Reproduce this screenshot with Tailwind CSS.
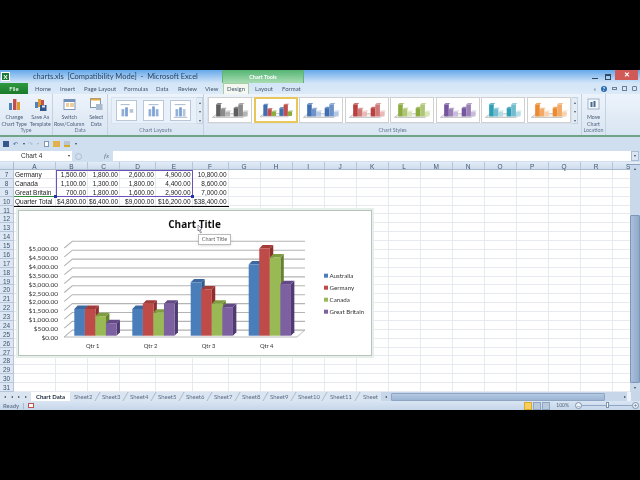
<!DOCTYPE html>
<html lang="en">
  <head>
    <meta charset="UTF-8" />
    <title>charts.xls - Microsoft Excel</title>
    <script src="https://cdn.jsdelivr.net/npm/@tailwindcss/browser@4"></script>
  </head>
  <body class="bg-black">
    <div class="w-[640px] h-[480px] bg-black flex flex-col overflow-hidden font-['Lato',sans-serif] text-[#4a5e78] relative blur-[0.3px]">
      <div class="h-[70px] shrink-0"></div>

      <!-- title bar -->
      <div class="h-[13px] shrink-0 flex items-center bg-gradient-to-b from-[#64a8ea] to-[#d3e5f7] relative">
        <div class="w-[9px] h-[9px] ml-[1px] bg-[#1f7a3a] border border-white text-white text-[6px] leading-[7px] text-center font-bold">X</div>
        <div class="ml-[23px] text-[7.5px] text-[#2a4462] whitespace-pre">charts.xls  [Compatibility Mode]  -  Microsoft Excel</div>
        <div class="absolute left-[222px] top-0 w-[82px] h-[13px] bg-gradient-to-b from-[#58b878] to-[#a8dcb4] border-x border-t border-[#5fb574] text-white text-[5.5px] font-bold text-center leading-[13px]">Chart Tools</div>
        <div class="ml-auto flex items-center h-full">
          <div class="w-[6px] h-[1.5px] bg-[#33475e] mr-[7px] mt-[4px]"></div>
          <div class="w-[6px] h-[6px] border border-t-2 border-[#33475e] mr-[4px]"></div>
          <div class="w-[23px] h-[10px] bg-[#d05a58] text-white text-[7px] leading-[9px] text-center font-bold mr-[2px] mb-[3px]">✕</div>
        </div>
      </div>

      <!-- tabs -->
      <div class="h-[11px] shrink-0 flex items-center text-[6px] text-[#44566e] bg-gradient-to-b from-[#d3e5f7] to-[#dceaf8] relative">
        <div class="w-[28px] h-full bg-gradient-to-b from-[#2f9a3f] to-[#1a7a2c] text-white text-center leading-[11px]">File</div>
        <span class="absolute left-[35px]">Home</span>
        <span class="absolute left-[60px]">Insert</span>
        <span class="absolute left-[84px]">Page Layout</span>
        <span class="absolute left-[124px]">Formulas</span>
        <span class="absolute left-[156px]">Data</span>
        <span class="absolute left-[178px]">Review</span>
        <span class="absolute left-[205px]">View</span>
        <span class="absolute left-[223px] w-[26px] h-[11px] bg-[#f4f8f0] border-x border-t border-[#a8cfa8] text-center leading-[10px]">Design</span>
        <span class="absolute left-[255px]">Layout</span>
        <span class="absolute left-[282px]">Format</span>
        <div class="ml-auto flex items-center gap-[5px] pr-[3px]">
          <span class="text-[6px] text-[#5a6f88]">«</span>
          <span class="w-[6px] h-[6px] rounded-full bg-[#2a6cb0] text-white text-[5px] leading-[6px] text-center font-bold">?</span>
          <span class="w-[5px] h-[3px] border border-[#6a7f98]"></span>
          <span class="w-[5px] h-[5px] border border-[#6a7f98]"></span>
          <span class="w-[5px] h-[5px] border border-[#6a7f98] rounded-[1px]"></span>
        </div>
      </div>

      <!-- ribbon -->
      <div class="h-[43px] shrink-0 flex bg-gradient-to-b from-[#edf3fb] to-[#d9e5f2] border-b-2 border-[#6fa586] text-[5.3px] leading-[6.5px] text-center whitespace-nowrap">
        <div class="w-[53px] flex flex-col border-r border-[#c5d2e2]">
          <div class="flex-1 flex pt-[4px]">
            <div class="w-[29px] flex flex-col items-center">
              <svg class="w-[13px] h-[13px]" viewBox="0 0 13 13"><rect x="1" y="5" width="3" height="7" fill="#4f81bd"/><rect x="5" y="1" width="3.400" height="11" fill="#c0504d"/><rect x="9" y="4" width="3" height="8" fill="#e39a2c"/></svg>
              <div class="mt-[3px]">Change<br />Chart Type</div>
            </div>
            <div class="w-[24px] flex flex-col items-center">
              <svg class="w-[13px] h-[13px]" viewBox="0 0 13 13"><rect x="1" y="4" width="3" height="6" fill="#4f81bd"/><rect x="4" y="1" width="3" height="8" fill="#e39a2c"/><rect x="7" y="2" width="3" height="5" fill="#c0504d"/><rect x="6" y="7" width="6.500" height="6" fill="#34568a"/><rect x="8" y="7.500" width="3" height="2" fill="#dfe9f5"/></svg>
              <div class="mt-[3px]">Save As<br />Template</div>
            </div>
          </div>
          <div class="h-[8px] text-[#62768e]">Type</div>
        </div>
        <div class="w-[55px] flex flex-col border-r border-[#c5d2e2]">
          <div class="flex-1 flex pt-[4px]">
            <div class="w-[33px] flex flex-col items-center">
              <svg class="w-[13px] h-[13px]" viewBox="0 0 13 13"><rect x="1" y="1.500" width="11" height="10" fill="#fff" stroke="#7d97b8"/><rect x="1" y="1.500" width="11" height="2.500" fill="#6f8fb8"/><path d="M3 6h3M7 6h4M3 8h3M7 8h4" stroke="#d99a3a"/></svg>
              <div class="mt-[3px]">Switch<br />Row/Column</div>
            </div>
            <div class="w-[22px] flex flex-col items-center">
              <svg class="w-[13px] h-[13px]" viewBox="0 0 13 13"><rect x="0.500" y="0.500" width="10" height="9" fill="#fff" stroke="#7d97b8"/><rect x="0.500" y="0.500" width="10" height="2" fill="#e3a83e"/><rect x="6" y="6" width="6.500" height="6" fill="#a9bacd"/></svg>
              <div class="mt-[3px]">Select<br />Data</div>
            </div>
          </div>
          <div class="h-[8px] text-[#62768e]">Data</div>
        </div>
        <div class="w-[96px] flex flex-col border-r border-[#c5d2e2]">
          <div class="flex-1 flex items-center pl-[3px] pb-[1px]">
            <div class="flex h-[27px] w-[86px] items-center gap-[6px] bg-[#e8f0f9] border border-[#d8e2ee] pl-[4px]">
              <svg class="w-[21px] h-[21px] bg-white border border-[#b9c7d8] shrink-0" viewBox="0 0 21 21"><path d="M4 4h10" stroke="#9db1cb"/><rect x="5" y="9" width="3" height="8" fill="#8fb0dc"/><rect x="9" y="7" width="3" height="10" fill="#7b9fd2"/><rect x="14" y="9" width="4" height="4" fill="#b3c4dc"/></svg>
              <svg class="w-[21px] h-[21px] bg-white border border-[#b9c7d8] shrink-0" viewBox="0 0 21 21"><path d="M5 4h11" stroke="#9db1cb"/><rect x="5" y="9" width="3" height="8" fill="#8fb0dc"/><rect x="9" y="6" width="3" height="11" fill="#7b9fd2"/><rect x="13" y="9" width="3" height="8" fill="#8fb0dc"/></svg>
              <svg class="w-[21px] h-[21px] bg-white border border-[#b9c7d8] shrink-0" viewBox="0 0 21 21"><path d="M4 4h12M3 18h15" stroke="#9db1cb"/><rect x="5" y="9" width="3" height="8" fill="#8fb0dc"/><rect x="9" y="7" width="3" height="10" fill="#7b9fd2"/><rect x="13" y="9" width="3" height="8" fill="#b3c4dc"/></svg>
            </div>
            <div class="flex flex-col w-[6px] h-[27px] text-[4px] leading-[9px] bg-[#e3ebf5] border-y border-r border-[#c5d2e2] text-[#4a5d75]"><span>▴</span><span>▾</span><span>▾</span></div>
          </div>
          <div class="h-[8px] text-[#62768e]">Chart Layouts</div>
        </div>
        <div class="w-[378px] flex flex-col border-r border-[#c5d2e2]">
          <div class="flex-1 flex items-center pl-[3px] pb-[1px]">
            <div id="gallery" class="flex h-[27px] w-[365px] items-center justify-between bg-white border border-[#d8e2ee]"></div>
            <div class="flex flex-col w-[6px] h-[27px] text-[4px] leading-[9px] bg-[#e3ebf5] border-y border-r border-[#c5d2e2] text-[#4a5d75]"><span>▴</span><span>▾</span><span>▾</span></div>
          </div>
          <div class="h-[8px] text-[#62768e]">Chart Styles</div>
        </div>
        <div class="w-[24px] flex flex-col border-r border-[#c5d2e2]">
          <div class="flex-1 flex flex-col items-center pt-[4px]">
            <svg class="w-[13px] h-[13px]" viewBox="0 0 13 13"><rect x="1" y="1" width="11" height="10" fill="#f7fafd" stroke="#9db1cb"/><rect x="3.500" y="4" width="2" height="5" fill="#4a6a94"/><rect x="6.500" y="3" width="2" height="6" fill="#4a6a94"/></svg>
            <div class="mt-[3px]">Move<br />Chart</div>
          </div>
          <div class="h-[8px] text-[#62768e]">Location</div>
        </div>
      </div>

      <!-- quick access -->
      <div class="h-[14px] shrink-0 flex items-center bg-[#cfdfef] text-[6px] leading-none relative">
        <span class="absolute left-[3px] w-[6px] h-[6px] bg-[#34568a]"></span>
        <span class="absolute left-[13px] text-[#3a5f94]">↶</span>
        <span class="absolute left-[23px] text-[4px] text-[#34465e]">▾</span>
        <span class="absolute left-[28px] text-[#a8b6c6]">↷</span>
        <span class="absolute left-[37px] text-[4px] text-[#a8b6c6]">▾</span>
        <span class="absolute left-[44px] w-[5px] h-[6px] bg-white border border-[#8299b5]"></span>
        <span class="absolute left-[53px] w-[7px] h-[6px] bg-[#e3b04a]"></span>
        <span class="absolute left-[64px] w-[6px] h-[6px] bg-[#b9c4d2] border-b-2 border-[#d9a92e]"></span>
        <span class="absolute left-[75px] text-[4px] text-[#34465e]">▾</span>
      </div>

      <!-- formula bar -->
      <div class="h-[11px] shrink-0 flex items-stretch bg-[#cfdfef] pb-[1px] text-[#333]">
        <div class="w-[72px] bg-white flex items-center text-[6.5px] pl-[21px] pr-[2px] justify-between font-['Liberation_Sans',sans-serif]">Chart 4<span class="text-[4px]">▾</span></div>
        <div class="w-[41px] flex items-center justify-between pl-[3px] pr-[4px] text-[#5b6f88]">
          <span class="w-[7px] h-[7px] border border-[#aebccd] rounded-full"></span>
          <span class="italic font-['Liberation_Serif',serif] text-[7px]">fx</span>
        </div>
        <div class="flex-1 bg-white"></div>
        <div class="w-[8px] bg-[#dbe6f2] border border-[#a9bcd2] text-[4px] leading-[8px] text-center text-[#34465e] mr-[1px]">▾</div>
      </div>

      <!-- sheet -->
      <div class="h-[230px] shrink-0 flex relative bg-white font-['Liberation_Sans',sans-serif] text-[6.5px] text-[#222]">
        <div id="cells" class="flex-1 min-w-0 overflow-hidden"></div>
        <div class="w-[10px] shrink-0 flex flex-col bg-[#c9d8ea] text-[4px] text-center text-[#33475e]">
          <div class="h-[3px] bg-[#e6edf6] border-b border-[#8ea6c4]"></div>
          <div class="h-[7px] leading-[7px]">▴</div>
          <div class="h-[43px]"></div>
          <div class="flex-1 bg-gradient-to-r from-[#a9c0dc] to-[#8fa9ca] border border-[#7d97b8] rounded-[1px]"></div>
          <div class="h-[9px] leading-[9px]">▾</div>
        </div>

        <!-- selection over the cells -->
        <div class="absolute left-[56px] top-[8px] w-[136.6px] h-[27px] border border-[#6a52b8]"></div>
        <div class="absolute left-[14px] top-[34px] w-[42px] h-px bg-[#2f8a3a]"></div>
        <div class="absolute left-[54px] top-[33px] w-[3px] h-[3px] bg-[#2233aa]"></div>
        <div class="absolute left-[191px] top-[33px] w-[3px] h-[3px] bg-[#2233aa]"></div>
        <div class="absolute left-[14px] top-[44px] w-[215px] h-px bg-black"></div>

        <!-- chart -->
        <div class="absolute left-[16px] top-[46px] w-[358px] h-[150px] border-[3px] border-[#e6efea]">
          <svg class="w-[352px] h-[144px] bg-white border border-[#b7c3bd] box-content -m-px block" viewBox="19 211 352 144" id="chart"></svg>
        </div>
        <div class="absolute left-[198px] top-[72px] h-[11px] w-[33px] bg-white border border-[#bbb] shadow-sm text-[5.5px] leading-[9px] text-center text-[#666] font-['Lato',sans-serif]">Chart Title</div>
        <svg class="absolute left-[197px] top-[63px] w-[6px] h-[9px]" viewBox="0 0 6 9"><path d="M1 0l4 4-2 .5 1.500 3-1 .5-1.500-3L1 6z" fill="#fff" stroke="#556" stroke-width=".6"/></svg>
      </div>

      <!-- sheet tabs -->
      <div class="h-[9px] shrink-0 flex items-center bg-[#dbe5f1] text-[6px] text-[#5a6f88] relative">
        <div class="w-[31px] flex justify-around text-[4px] px-[2px] text-[#33475e]"><span>◂</span><span>◂</span><span>▸</span><span>▸</span></div>
        <div class="w-[39px] h-full bg-white text-[#1c2b3e] font-bold text-center leading-[9px] text-[6px]">Chart Data</div>
        <div class="flex h-full items-center">
          <span class="w-[28px] text-center border-r border-[#a9bacd] -skew-x-[30deg]"><span class="inline-block skew-x-[30deg]">Sheet2</span></span>
          <span class="w-[28px] text-center border-r border-[#a9bacd] -skew-x-[30deg]"><span class="inline-block skew-x-[30deg]">Sheet3</span></span>
          <span class="w-[28px] text-center border-r border-[#a9bacd] -skew-x-[30deg]"><span class="inline-block skew-x-[30deg]">Sheet4</span></span>
          <span class="w-[28px] text-center border-r border-[#a9bacd] -skew-x-[30deg]"><span class="inline-block skew-x-[30deg]">Sheet5</span></span>
          <span class="w-[28px] text-center border-r border-[#a9bacd] -skew-x-[30deg]"><span class="inline-block skew-x-[30deg]">Sheet6</span></span>
          <span class="w-[28px] text-center border-r border-[#a9bacd] -skew-x-[30deg]"><span class="inline-block skew-x-[30deg]">Sheet7</span></span>
          <span class="w-[28px] text-center border-r border-[#a9bacd] -skew-x-[30deg]"><span class="inline-block skew-x-[30deg]">Sheet8</span></span>
          <span class="w-[28px] text-center border-r border-[#a9bacd] -skew-x-[30deg]"><span class="inline-block skew-x-[30deg]">Sheet9</span></span>
          <span class="w-[31px] text-center border-r border-[#a9bacd] -skew-x-[30deg]"><span class="inline-block skew-x-[30deg]">Sheet10</span></span>
          <span class="w-[33px] text-center border-r border-[#a9bacd] -skew-x-[30deg]"><span class="inline-block skew-x-[30deg]">Sheet11</span></span>
          <span class="w-[25px] text-center"><span class="inline-block">Sheet</span></span>
        </div>
        <div class="absolute left-[381px] top-0 bottom-0 w-[259px] flex items-center bg-[#c7d6e8] text-[4px] text-[#33475e]">
          <span class="w-[10px] text-center">◂</span>
          <span class="w-[214px] h-[8px] bg-gradient-to-b from-[#b3c8e2] to-[#9db6d4] border border-[#8ea6c4] rounded-[1px]"></span>
          <span class="w-[21px] text-right">▸</span>
          <span class="w-[4px] h-full ml-[1px] bg-[#eef3f9]"></span>
        </div>
      </div>

      <!-- status bar -->
      <div class="h-[9px] shrink-0 flex items-center bg-gradient-to-b from-[#d9e5f3] to-[#c6d6e9] text-[6px] text-[#52667e] pl-[3px]">
        <span>Ready</span>
        <span class="w-px h-[6px] bg-[#a9bacd] ml-[4px]"></span>
        <span class="w-[6px] h-[5px] bg-white border border-[#c0504d] ml-[4px]"></span>
        <div class="ml-auto flex items-center pr-[1px]">
          <span class="w-[8px] h-[8px] bg-[#f6cf5e] border border-[#d9a92e]"></span>
          <span class="w-[8px] h-[8px] ml-[1px] border border-[#8ea6c4] bg-[#b9c9dc]"></span>
          <span class="w-[8px] h-[8px] ml-[1px] border border-[#8ea6c4] bg-[#b9c9dc]"></span>
          <span class="ml-[6px] text-[5px]">100%</span>
          <span class="ml-[6px] w-[7px] h-[7px] rounded-full border border-[#7e93ad] bg-white/60 text-[6px] leading-[5px] text-center">−</span>
          <div class="w-[50px] h-px bg-[#8ea6c4] relative">
            <span class="absolute left-[24px] -top-[3px] w-[3px] h-[6px] bg-white border border-[#7e93ad]"></span>
          </div>
          <span class="w-[7px] h-[7px] rounded-full border border-[#7e93ad] bg-white/60 text-[6px] leading-[5px] text-center">+</span>
        </div>
      </div>
    </div>

    <script>
      // column widths read off the header row
      const widths = [42, 32, 32, 36, 36.6, 36, 32, 32, 32, 32, 32, 32, 32, 32, 32, 32, 32, 32, 32];
      const letters = "ABCDEFGHIJKLMNOPQRS";
      const data = {
        7: ["Germany", "1,500.00", "1,800.00", "2,600.00", "4,900.00", "10,800.00"],
        8: ["Canada", "1,100.00", "1,300.00", "1,800.00", "4,400.00", "8,600.00"],
        9: ["Great Britain", "700.00", "1,800.00", "1,600.00", "2,900.00", "7,000.00"],
        10: ["Quarter Total", "$4,800.00", "$6,400.00", "$9,000.00", "$16,200.00", "$38,400.00"],
      };

      const cells = document.getElementById("cells");
      let html = '<div class="flex h-[8px] bg-gradient-to-b from-[#e3ecf7] to-[#cfdcec] border-b border-[#a9bacd] text-[#3e5470] text-center leading-[9px]"><div class="w-[14px] shrink-0 border-r border-[#a9bacd]"></div>';
      widths.forEach((w, i) => {
        html += '<div class="shrink-0 border-r border-[#b6c6d9]" style="width:' + w + 'px">' + letters[i] + "</div>";
      });
      html += "</div>";
      for (let r = 7; r <= 31; r++) {
        html += '<div class="flex h-[8.88px]"><div class="w-[14px] shrink-0 bg-[#dde7f3] border-r border-b border-[#b6c6d9] text-[#3e5470] text-center leading-[10px]">' + r + "</div>";
        widths.forEach((w, i) => {
          const v = data[r] ? data[r][i] : undefined;
          const align = i === 0 ? "pl-[1px] text-left" : "pr-[1px] text-right";
          html += '<div class="shrink-0 whitespace-nowrap leading-[10px] border-r border-b border-[#e6e9ed] ' + align + '" style="width:' + w + 'px">' + (v || "") + "</div>";
        });
        html += "</div>";
      }
      cells.innerHTML = html;

      // the small chart style thumbnails in the gallery
      const styles = [
        ["#5e5e5e", "#8a8a8a", "#b5b5b5"],
        ["#3f6fb0", "#c0504d", "#8cab3e"],
        ["#3f6fb0", "#6f93c8", "#b3c8e4"],
        ["#b8403e", "#cf7a78", "#eab9b7"],
        ["#8cab3e", "#afc676", "#d8e5b8"],
        ["#75559e", "#9a82b8", "#cabbdc"],
        ["#2f9fb8", "#73bccd", "#b5dde7"],
        ["#ee8a2e", "#f3aa68", "#f9d3b0"],
      ];
      let thumbs = "";
      styles.forEach((s, i) => {
        const cls = i === 1 ? "border-2 border-[#e9c65a]" : "border border-[#d0d0d0]";
        let g = '<polygon points="3,21 36,21 41,17 8,17" fill="#f2f2f2" stroke="#999" stroke-width=".6"/>';
        [[7, 13, 0], [12, 8, 1], [17, 5, 2], [26, 9, 0], [31, 13, 1], [36, 5, 2]].forEach((b) => {
          g += '<rect x="' + b[0] + '" y="' + (20 - b[1]) + '" width="5" height="' + b[1] + '" fill="' + s[b[2]] + '"/>';
          g += '<path d="M' + b[0] + " " + (20 - b[1]) + "l1.500 -1.500h5l-1.500 1.500z" + '" fill="' + s[b[2]] + '" opacity=".75"/>';
        });
        thumbs += '<svg class="w-[44px] h-[26px] bg-white ' + cls + '" viewBox="0 0 44 26">' + g + "</svg>";
      });
      document.getElementById("gallery").innerHTML = thumbs;

      // chart drawn in page coordinates
      const colors = [
        ["#4a7ebb", "#335a8c", "#3c68a0"],
        ["#be4b48", "#8c2f2d", "#a33b39"],
        ["#98b954", "#67822f", "#7f9c41"],
        ["#7d60a0", "#4f3b72", "#634a87"],
      ];
      const quarters = [
        [74.3, [1500, 1500, 1100, 700], "Qtr 1", 92.7],
        [132.3, [1500, 1800, 1300, 1800], "Qtr 2", 150.5],
        [190.7, [3000, 2600, 1800, 1600], "Qtr 3", 208.5],
        [248.7, [4000, 4900, 4400, 2900], "Qtr 4", 266.7],
      ];
      const font = 'font-family="Lato" fill="#333"';
      let svg = '<polygon points="64,337 72,330 305,330 297,337" fill="#fff" stroke="#aaa" stroke-width=".8"/>';
      for (let i = 0; i <= 10; i++) {
        const yb = 330.3 - i * 8.9;
        const yf = 337 - i * 8.9;
        svg += '<path d="M64.300 ' + yf + " L72.300 " + yb + " H305" + '" fill="none" stroke="#b4b4b4" stroke-width="' + (i === 0 ? 0.8 : 1.1) + '"/>';
        const money = "$" + (i * 500).toLocaleString("en-US") + ".00";
        svg += '<text x="58" y="' + (yf + 3) + '" text-anchor="end" font-size="6.5" ' + font + ">" + money + "</text>";
      }
      quarters.forEach((q) => {
        q[1].forEach((v, j) => {
          const x = q[0] + j * 10.55;
          const h = v * 0.0178;
          const base = 335.7;
          const top = base - h;
          const w = 10.6;
          const d = 3.4;
          svg += '<polygon points="' + (x + w) + "," + top + " " + (x + w + d) + "," + (top - d) + " " + (x + w + d) + "," + (base - d) + " " + (x + w) + "," + base + '" fill="' + colors[j][1] + '"/>';
          svg += '<polygon points="' + x + "," + top + " " + (x + d) + "," + (top - d) + " " + (x + w + d) + "," + (top - d) + " " + (x + w) + "," + top + '" fill="' + colors[j][2] + '"/>';
          svg += '<rect x="' + x + '" y="' + top + '" width="' + w + '" height="' + h + '" fill="' + colors[j][0] + '"/>';
        });
        svg += '<text x="' + q[3] + '" y="348" text-anchor="middle" font-size="5.8" ' + font + ">" + q[2] + "</text>";
      });
      ["Australia", "Germany", "Canada", "Great Britain"].forEach((name, i) => {
        const y = 275.7 + i * 12;
        svg += '<rect x="324" y="' + (y - 2) + '" width="4" height="4" fill="' + colors[i][0] + '"/>';
        svg += '<text x="329.500" y="' + (y + 2) + '" font-size="6.2" ' + font + ">" + name + "</text>";
      });
      svg += '<text x="194.500" y="228" text-anchor="middle" font-size="10" font-weight="700" font-family="Open Sans" fill="#111">Chart Title</text>';
      document.getElementById("chart").innerHTML = svg;
    </script>
  </body>
</html>
